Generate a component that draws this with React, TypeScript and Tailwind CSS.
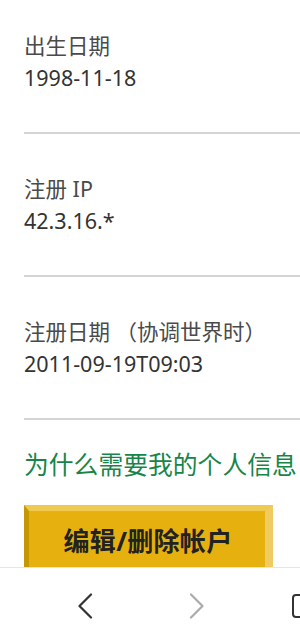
import React from "react";

const font = { fontFamily: '"Noto Sans", "Noto Sans CJK SC", sans-serif' };

function Item({ label, value, first }: { label: string; value: string; first?: boolean }) {
  return (
    <div
      className={
        (first ? "pt-[30px] " : "pt-[39px] ") +
        "pb-[38px] border-b-2 border-[#d4d4d4]"
      }
    >
      <div className="text-[21.5px] leading-[32px] text-[#4a4a4a] whitespace-nowrap">{label}</div>
      <div className="text-[21.5px] leading-[32px] text-[#333333] whitespace-nowrap">{value}</div>
    </div>
  );
}

export default function App() {
  return (
    <div className="w-[300px] h-[625px] overflow-hidden bg-white flex flex-col" style={font}>
      <div className="flex-1 overflow-hidden pl-6">
        <Item first label="出生日期" value="1998-11-18" />
        <Item label="注册 IP" value="42.3.16.*" />
        <Item label="注册日期 （协调世界时）" value="2011-09-19T09:03" />
        <div className="mt-[28px] text-[24.8px] leading-[32px] text-[#188548] whitespace-nowrap">
          为什么需要我的个人信息
        </div>
        <div className="mt-[25px] w-[249px] h-[80px] bg-[#e6b10e] border-l-[5px] border-l-[#c59705] border-t-[6px] border-t-[#f0c950] border-r-[8px] border-r-[#efcb62] flex items-start justify-center pt-[14px] pl-[2px]">
          <span className="text-[26px] leading-[32px] font-bold text-[#222222] tracking-[0.3px] whitespace-nowrap">
            编辑/删除帐户
          </span>
        </div>
      </div>
      <div className="h-[58px] shrink-0 border-t border-[#e6e6e6] bg-white flex items-start pt-[25px] pl-[77px]">
        <svg width="16" height="26" viewBox="0 0 16 26" fill="none" className="shrink-0">
          <path d="M14 1.5 L2.5 13 L14 24.5" stroke="#333333" strokeWidth="2.2" strokeLinecap="round" strokeLinejoin="round" />
        </svg>
        <svg width="16" height="26" viewBox="0 0 16 26" fill="none" className="shrink-0 ml-[96px]">
          <path d="M2 1.5 L13.5 13 L2 24.5" stroke="#ababab" strokeWidth="2.2" strokeLinecap="round" strokeLinejoin="round" />
        </svg>
        <div className="shrink-0 ml-[87px] mt-[1px] w-[20px] h-[24px] rounded-[4px] border-2 border-[#333333]" />
      </div>
    </div>
  );
}
